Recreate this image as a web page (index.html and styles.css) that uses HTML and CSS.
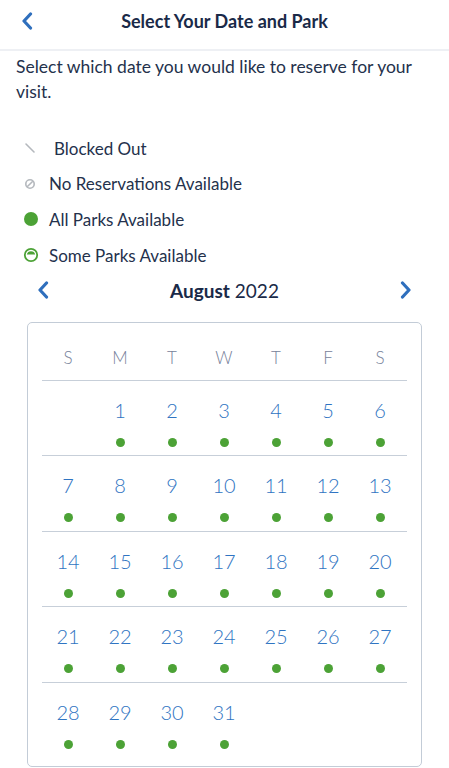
FILE: index.html
```html
<!DOCTYPE html>
<html>
<head>
<meta charset="utf-8">
<link rel="stylesheet" href="styles.css">
</head>
<body>
<header class="topbar">
  <span class="back">
    <svg width="12" height="18" viewBox="0 0 12 18"><path d="M9.5 2 L3 9 L9.5 16" fill="none" stroke="#2f6fbd" stroke-width="3.2" stroke-linecap="round" stroke-linejoin="round"/></svg>
  </span>
  <h1 class="title">Select Your Date and Park</h1>
</header>
<p class="intro">Select which date you would like to reserve for your visit.</p>
<ul class="legend">
  <li class="legend-item">
    <span class="legend-icon"><svg width="14" height="14" viewBox="0 0 14 14"><path d="M3 3 L11 11" stroke="#b4b8bd" stroke-width="1.6" stroke-linecap="round"/></svg></span>
    <span class="legend-text blocked">Blocked Out</span>
  </li>
  <li class="legend-item">
    <span class="legend-icon"><svg width="14" height="14" viewBox="0 0 14 14"><circle cx="7" cy="7" r="4.2" fill="none" stroke="#b4b8bd" stroke-width="1.6"/><path d="M4.2 9.8 L9.8 4.2" stroke="#b4b8bd" stroke-width="1.6"/></svg></span>
    <span class="legend-text">No Reservations Available</span>
  </li>
  <li class="legend-item">
    <span class="legend-icon"><svg width="16" height="16" viewBox="0 0 16 16"><circle cx="8" cy="8" r="7" fill="#4ca236"/></svg></span>
    <span class="legend-text">All Parks Available</span>
  </li>
  <li class="legend-item">
    <span class="legend-icon"><svg width="16" height="16" viewBox="0 0 16 16"><circle cx="8" cy="8" r="6.2" fill="none" stroke="#4ca236" stroke-width="1.8"/><path d="M3.8 7.6 A4.3 4.3 0 0 1 12.2 7.6 Z" fill="#4ca236"/></svg></span>
    <span class="legend-text">Some Parks Available</span>
  </li>
</ul>
<div class="month-nav">
  <span class="nav-arrow">
    <svg width="12" height="18" viewBox="0 0 12 18"><path d="M9.5 2 L3 9 L9.5 16" fill="none" stroke="#2f6fbd" stroke-width="3.2" stroke-linecap="round" stroke-linejoin="round"/></svg>
  </span>
  <span class="month"><b>August</b> 2022</span>
  <span class="nav-arrow">
    <svg width="12" height="18" viewBox="0 0 12 18"><path d="M2.5 2 L9 9 L2.5 16" fill="none" stroke="#2f6fbd" stroke-width="3.2" stroke-linecap="round" stroke-linejoin="round"/></svg>
  </span>
</div>
<div class="calendar">
  <div class="week head">
    <span class="dow">S</span><span class="dow">M</span><span class="dow">T</span><span class="dow">W</span><span class="dow">T</span><span class="dow">F</span><span class="dow">S</span>
  </div>
  <div class="week">
    <span class="day empty"></span>
    <span class="day"><span class="num">1</span><span class="dot"></span></span>
    <span class="day"><span class="num">2</span><span class="dot"></span></span>
    <span class="day"><span class="num">3</span><span class="dot"></span></span>
    <span class="day"><span class="num">4</span><span class="dot"></span></span>
    <span class="day"><span class="num">5</span><span class="dot"></span></span>
    <span class="day"><span class="num">6</span><span class="dot"></span></span>
  </div>
  <div class="week">
    <span class="day"><span class="num">7</span><span class="dot"></span></span>
    <span class="day"><span class="num">8</span><span class="dot"></span></span>
    <span class="day"><span class="num">9</span><span class="dot"></span></span>
    <span class="day"><span class="num">10</span><span class="dot"></span></span>
    <span class="day"><span class="num">11</span><span class="dot"></span></span>
    <span class="day"><span class="num">12</span><span class="dot"></span></span>
    <span class="day"><span class="num">13</span><span class="dot"></span></span>
  </div>
  <div class="week">
    <span class="day"><span class="num">14</span><span class="dot"></span></span>
    <span class="day"><span class="num">15</span><span class="dot"></span></span>
    <span class="day"><span class="num">16</span><span class="dot"></span></span>
    <span class="day"><span class="num">17</span><span class="dot"></span></span>
    <span class="day"><span class="num">18</span><span class="dot"></span></span>
    <span class="day"><span class="num">19</span><span class="dot"></span></span>
    <span class="day"><span class="num">20</span><span class="dot"></span></span>
  </div>
  <div class="week">
    <span class="day"><span class="num">21</span><span class="dot"></span></span>
    <span class="day"><span class="num">22</span><span class="dot"></span></span>
    <span class="day"><span class="num">23</span><span class="dot"></span></span>
    <span class="day"><span class="num">24</span><span class="dot"></span></span>
    <span class="day"><span class="num">25</span><span class="dot"></span></span>
    <span class="day"><span class="num">26</span><span class="dot"></span></span>
    <span class="day"><span class="num">27</span><span class="dot"></span></span>
  </div>
  <div class="week last">
    <span class="day"><span class="num">28</span><span class="dot"></span></span>
    <span class="day"><span class="num">29</span><span class="dot"></span></span>
    <span class="day"><span class="num">30</span><span class="dot"></span></span>
    <span class="day"><span class="num">31</span><span class="dot"></span></span>
    <span class="day empty"></span>
    <span class="day empty"></span>
    <span class="day empty"></span>
  </div>
</div>
</body>
</html>
```
FILE: styles.css
```css
* { box-sizing: border-box; }
html, body { margin: 0; padding: 0; background: #fff; }
body {
  width: 449px;
  height: 768px;
  overflow: hidden;
  font-family: Lato, "Noto Sans", sans-serif;
  color: #1c2a44;
}
.topbar {
  height: 51px;
  border-bottom: 2px solid #eef0f4;
  display: flex;
  align-items: center;
  justify-content: center;
  position: relative;
}
.back {
  position: absolute;
  left: 21px;
  top: 12px;
  display: flex;
}
.title {
  margin: 0 0 7px 0;
  font-size: 18px;
  font-weight: 700;
  color: #1a2a48;
}
.intro {
  margin: 0;
  padding: 3px 16px 0 16px;
  font-size: 17.5px;
  line-height: 25px;
  color: #24314c;
}
.legend {
  list-style: none;
  margin: 0;
  padding: 32px 0 0 23px;
  display: flex;
  flex-direction: column;
  gap: 11.7px;
}
.legend-item {
  display: flex;
  align-items: center;
  height: 24px;
  font-size: 17px;
}
.legend-icon {
  width: 26px;
  display: flex;
  align-items: center;
}
.legend-text { color: #24314c; }
.legend-text.blocked { margin-left: 5px; }
.month-nav {
  display: flex;
  align-items: center;
  justify-content: space-between;
  padding: 11px 37px 0 37px;
  height: 35px;
}
.nav-arrow { display: flex; }
.month {
  font-size: 19px;
  color: #1a2a48;
}
.month b { font-weight: 700; }
.calendar {
  margin: 20px 27px 0 27px;
  border: 1.5px solid #c3ccd7;
  border-radius: 5px;
  padding: 0 14px 0 14px;
  height: 445px;
}
.week {
  display: grid;
  grid-template-columns: repeat(7, 52px);
  border-bottom: 1.5px solid #c7cfd9;
  height: 75.4px;
}
.week.head {
  height: 58px;
  align-items: center;
  padding-top: 12px;
}
.week.last { border-bottom: none; }
.dow {
  text-align: center;
  font-size: 17px;
  font-weight: 300;
  color: #76819a;
}
.day {
  display: flex;
  flex-direction: column;
  align-items: center;
  padding-top: 17px;
}
.num {
  font-size: 20px;
  line-height: 24px;
  font-weight: 300;
  color: #2f74c2;
}
.dot {
  width: 9px;
  height: 9px;
  border-radius: 50%;
  background: #4ca236;
  margin-top: 16px;
}
```
